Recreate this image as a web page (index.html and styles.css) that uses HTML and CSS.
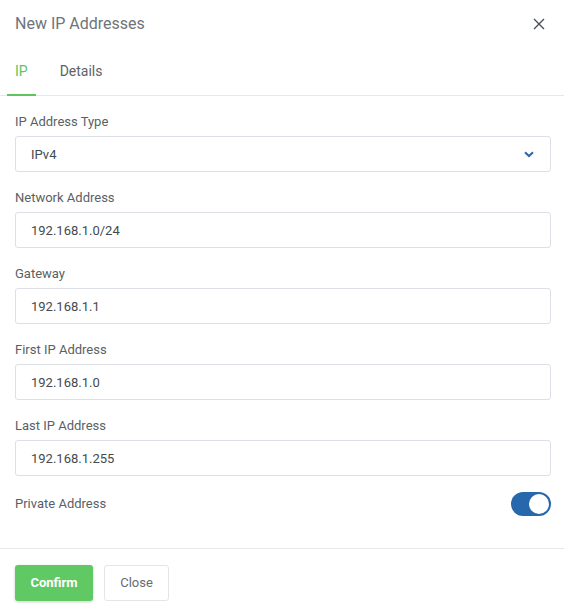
FILE: index.html
```html
<!DOCTYPE html>
<html lang="en">
<head>
    <meta charset="UTF-8">
    <meta name="viewport" content="width=device-width, initial-scale=1.0">
    <title>New IP Addresses</title>
    <link rel="stylesheet" href="styles.css">
</head>
<body>
    <div class="modal">
        <div class="modal-header">
            <span class="modal-title">New IP Addresses</span>
            <button class="close-x" aria-label="Close">
                <svg width="12" height="12" viewBox="0 0 12 12"><path d="M1 1L11 11M11 1L1 11" stroke="#4a4f55" stroke-width="1.4" fill="none"/></svg>
            </button>
        </div>
        <div class="tabs">
            <div class="tab active">IP</div>
            <div class="tab">Details</div>
        </div>
        <div class="modal-body">
            <div class="field">
                <label>IP Address Type</label>
                <div class="input select">
                    <span>IPv4</span>
                    <svg width="10" height="7" viewBox="0 0 10 7"><path d="M1 1.2L5 5L9 1.2" stroke="#2d67ad" stroke-width="2" fill="none"/></svg>
                </div>
            </div>
            <div class="field">
                <label>Network Address</label>
                <div class="input">192.168.1.0/24</div>
            </div>
            <div class="field">
                <label>Gateway</label>
                <div class="input">192.168.1.1</div>
            </div>
            <div class="field">
                <label>First IP Address</label>
                <div class="input">192.168.1.0</div>
            </div>
            <div class="field">
                <label>Last IP Address</label>
                <div class="input">192.168.1.255</div>
            </div>
            <div class="switch-row">
                <label>Private Address</label>
                <div class="switch"><span class="knob"></span></div>
            </div>
        </div>
        <div class="modal-footer">
            <button class="btn btn-confirm">Confirm</button>
            <button class="btn btn-close">Close</button>
        </div>
    </div>
</body>
</html>
```

FILE: styles.css
```css
body {
    margin: 0;
    background: #ffffff;
    font-family: Roboto, "Liberation Sans", sans-serif;
}

.modal {
    width: 564px;
}

.modal-header {
    display: flex;
    justify-content: space-between;
    align-items: center;
    height: 47px;
    padding: 0 15px;
}

.modal-title {
    font-size: 16px;
    color: #6f747a;
}

.close-x {
    border: none;
    background: none;
    padding: 0;
    margin-right: 4px;
    display: flex;
    margin-top: 1px;
}

.tabs {
    display: flex;
    height: 48px;
    border-bottom: 1px solid #e6e8ec;
    padding-left: 7px;
}

.tab {
    padding: 16px 8px 0;
    margin-right: 16px;
    font-size: 14px;
    color: #5d6268;
    box-sizing: border-box;
    height: 49px;
}

.tab.active {
    color: #5cc560;
    border-bottom: 2px solid #5cc560;
}

.modal-body {
    padding: 15px 13px 32px 15px;
}

.field {
    display: flex;
    flex-direction: column;
    margin-bottom: 15px;
}

label {
    font-size: 13px;
    line-height: 20px;
    color: #5a5f65;
    padding-top: 1px;
    margin-bottom: 4px;
}

.input {
    height: 36px;
    box-sizing: border-box;
    border: 1px solid #dcdfe6;
    border-radius: 3px;
    padding: 0 15px;
    display: flex;
    align-items: center;
    justify-content: space-between;
    font-size: 13px;
    color: #444a50;
}

.select svg {
    margin-right: 1px;
}

.switch-row {
    display: flex;
    justify-content: space-between;
    align-items: center;
    height: 25px;
}

.switch-row label {
    margin-bottom: 0;
    padding-top: 0;
}

.switch {
    width: 40px;
    height: 24px;
    border-radius: 12px;
    background: #2767ab;
    display: flex;
    align-items: center;
    justify-content: flex-end;
    padding: 0 2px;
    box-sizing: border-box;
}

.knob {
    width: 20px;
    height: 20px;
    border-radius: 50%;
    background: #ffffff;
}

.modal-footer {
    border-top: 1px solid #e6e8ec;
    padding: 16px 15px;
    display: flex;
    gap: 11px;
}

.btn {
    height: 36px;
    border-radius: 3px;
    font-family: Roboto, "Liberation Sans", sans-serif;
    font-size: 13px;
    padding: 0 0 2px;
    cursor: pointer;
}

.btn-confirm {
    width: 78px;
    background: #60c963;
    color: #ffffff;
    font-weight: bold;
    border: none;
    box-shadow: 0 1px 3px rgba(0, 0, 0, 0.2);
}

.btn-close {
    width: 65px;
    background: #ffffff;
    color: #666b72;
    border: 1px solid #e3e5e8;
}
```
